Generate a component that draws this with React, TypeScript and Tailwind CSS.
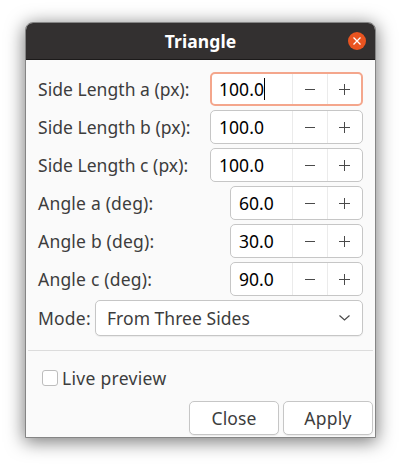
import React from "react";

type SpinProps = { label: string; value: string; wide?: boolean; focused?: boolean; spacing: string };

function SpinRow({ label, value, wide, focused, spacing }: SpinProps) {
  return (
    <div className="flex h-[34px] items-center justify-between">
      <span className={`whitespace-nowrap ${spacing}`}>{label}</span>
      <div
        className={`flex h-[34px] overflow-hidden rounded-[5px] bg-white text-black ${wide ? "w-[153px]" : "w-[133px]"} ${
          focused ? "border-2 border-[#f4a68c]" : "border border-[#c6c6c6]"
        }`}
      >
        <div className={`flex flex-1 items-center ${focused ? "pl-[7px]" : "pl-2"}`}>
          <span className="tracking-[0.05px]">{value}</span>
          {focused && <span className="h-[22px] w-px bg-black" />}
        </div>
        <div className="flex w-[35px] items-center justify-center border-l border-[#ebebeb]">
          <span className="h-px w-2.5 bg-[#4a4a4a]" />
        </div>
        <div className={`flex items-center border-l border-[#ebebeb] pl-[11px] ${focused ? "w-[34px]" : "w-[35px]"}`}>
          <svg width="11" height="11" viewBox="0 0 11 11" shapeRendering="crispEdges">
            <path d="M0 5.5H11M5.5 0V11" stroke="#4a4a4a" />
          </svg>
        </div>
      </div>
    </div>
  );
}

export default function App() {
  return (
    <div className="h-[466px] w-[401px] overflow-hidden bg-white px-[25px] pt-[22px] font-['Noto_Sans',sans-serif] text-[17.5px] leading-6 text-[#3d3d3d]">
      <div className="flex h-[416px] w-[351px] flex-col rounded-t-[8px] border border-[#858585] bg-[#fafafa] shadow-[0_3px_18px_1px_rgba(0,0,0,0.52)]">
        <header className="grid h-[37px] shrink-0 grid-cols-[36px_1fr_36px] items-center rounded-t-[7px] border-b border-[#1c1a1a] bg-[#333030] text-white">
          <span />
          <h1 className="text-center text-[17.5px] font-bold tracking-[0.1px]">Triangle</h1>
          <button className="mr-[9px] flex size-[18px] items-center justify-center justify-self-end rounded-full bg-[#e95420]">
            <svg width="8" height="8" viewBox="0 0 8 8">
              <path d="M.5 .5L7.5 7.5M7.5 .5L.5 7.5" stroke="white" strokeWidth="1.3" />
            </svg>
          </button>
        </header>
        <div className="flex flex-col gap-1 pt-3 pr-3 pl-3">
          <SpinRow label="Side Length a (px):" value="100.0" wide focused spacing="tracking-[0.04px]" />
          <SpinRow label="Side Length b (px):" value="100.0" wide spacing="tracking-[0.04px]" />
          <SpinRow label="Side Length c (px):" value="100.0" wide spacing="tracking-[0.04px]" />
          <SpinRow label="Angle a (deg):" value="60.0" spacing="tracking-[0.2px]" />
          <SpinRow label="Angle b (deg):" value="30.0" spacing="tracking-[0.2px]" />
          <SpinRow label="Angle c (deg):" value="90.0" spacing="tracking-[0.2px]" />
          <div className="flex h-9 items-center justify-between">
            <span className="tracking-[0.2px]">Mode:</span>
            <div className="flex h-9 w-[268px] items-center justify-between rounded-[5px] border border-[#c6c6c6] bg-white pr-3 pl-[11px] shadow-[0_1px_1px_rgba(0,0,0,0.06)]">
              <span className="tracking-[0.03px]">From Three Sides</span>
              <svg width="11" height="6" viewBox="0 0 11 6">
                <path d="M.5 .5L5.5 5L10.5 .5" fill="none" stroke="#4a4a4a" strokeWidth="1.2" />
              </svg>
            </div>
          </div>
        </div>
        <div className="mx-0.5 mt-3.5 h-px shrink-0 bg-[#dcdcdc]" />
        <label className="mt-[15px] flex items-center pl-4">
          <span className="size-4 rounded-[3px] border border-[#bdbdbd] bg-white" />
          <span className="ml-1 tracking-[0.3px]">Live preview</span>
        </label>
        <div className="mt-[11px] flex justify-end gap-1 pr-0.5">
          <button className="h-[34px] w-[90px] rounded-[5px] border border-[#c6c6c6] bg-white tracking-[0.1px] shadow-[0_1px_1px_rgba(0,0,0,0.06)]">Close</button>
          <button className="h-[34px] w-[90px] rounded-[5px] border border-[#c6c6c6] bg-white tracking-[0.3px] shadow-[0_1px_1px_rgba(0,0,0,0.06)]">Apply</button>
        </div>
      </div>
    </div>
  );
}
